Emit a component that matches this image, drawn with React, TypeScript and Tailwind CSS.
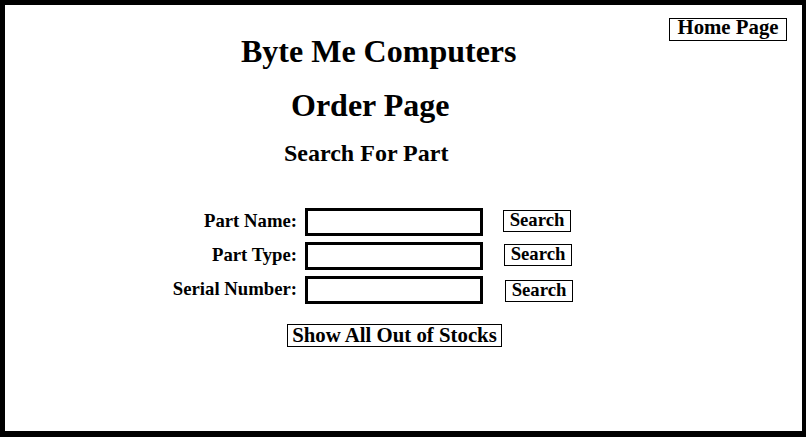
import React from 'react'

const ROWS = [
  { label: 'Part Name:', btnGap: 'ml-[20px]', btnTop: 'mt-[2px]' },
  { label: 'Part Type:', btnGap: 'ml-[21px]', btnTop: 'mt-[2px]' },
  { label: 'Serial Number:', btnGap: 'ml-[22px]', btnTop: 'mt-[4px]' },
]

function SearchRow({ label, btnGap, btnTop }: { label: string; btnGap: string; btnTop: string }) {
  return (
    <div className="flex items-start">
      <label className="w-[292px] text-right text-[18.72px] leading-[25px] font-bold">{label}</label>
      <input
        type="text"
        className="ml-[8px] h-[28px] w-[178px] border-[3px] border-black bg-white outline-none"
      />
      <button
        className={`${btnGap} ${btnTop} w-[68px] border border-black bg-white pb-[3px] text-center text-[18.72px] leading-[17px] font-bold`}
      >
        Search
      </button>
    </div>
  )
}

export default function App() {
  return (
    <div className="h-[437px] w-[806px] border-t-[5px] border-l-[5px] border-r-[4px] border-b-[6px] border-black bg-white font-['Liberation_Serif',serif] text-black">
      <div className="flex items-start">
        <h1 className="mt-[30px] pl-[236px] text-[32px] leading-[32px] font-bold">Byte Me Computers</h1>
        <button className="ml-auto mr-[15px] mt-[13px] w-[118px] border border-black bg-white pb-[5px] text-center text-[20.8px] leading-[16px] font-bold">
          Home Page
        </button>
      </div>

      <h2 className="mt-[22px] pl-[286px] text-[32px] leading-[32px] font-bold">Order Page</h2>
      <h3 className="mt-[20px] pl-[279px] text-[24px] leading-[24px] font-bold">Search For Part</h3>

      <form className="mt-[43px] flex flex-col gap-[6px]" onSubmit={(e) => e.preventDefault()}>
        {ROWS.map((r) => (
          <SearchRow key={r.label} {...r} />
        ))}
      </form>

      <div className="mt-[20px] pl-[282px]">
        <button className="w-[215px] border border-black bg-white pb-[1px] text-center text-[20.8px] leading-[20px] font-bold">
          Show All Out of Stocks
        </button>
      </div>
    </div>
  )
}
